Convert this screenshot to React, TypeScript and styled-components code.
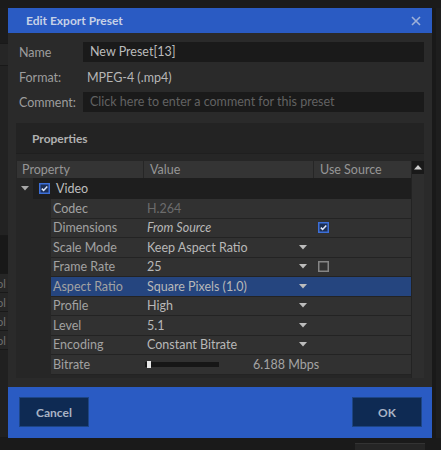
import React from 'react';
import styled, { createGlobalStyle } from 'styled-components';

const Global = createGlobalStyle`
  html, body { margin: 0; padding: 0; background: #1b1b1b; }
  body { font-family: Lato, "Noto Sans", "DejaVu Sans", sans-serif; font-size: 12.5px; }
  * { box-sizing: border-box; }
`;

const Desktop = styled.div`
  width: 441px;
  height: 450px;
  overflow: hidden;
  background: #1b1b1b;
  display: flex;
  flex-direction: column;
  padding-top: 8px;
`;

const Middle = styled.div`
  display: flex;
  height: 430px;
`;

const LeftRail = styled.div`
  width: 8px;
  display: flex;
  flex-direction: column;
  background: #202020;
`;

const RailBand = styled.div<{ $h: number; $c: string }>`
  height: ${p => p.$h}px;
  background: ${p => p.$c};
  border-bottom: 1px solid #191919;
  color: #6f6f6f;
  font-size: 11px;
  line-height: ${p => p.$h}px;
  overflow: hidden;
  white-space: nowrap;
  text-indent: -3px;
`;

const RightRail = styled.div`
  width: 9px;
  background: #191919;
  border-right: 5px solid #1e1e1e;
`;

const BottomBar = styled.div`
  height: 12px;
  display: flex;
  justify-content: flex-end;
  padding: 5px 16px 0 0;
  background: #1a1a1a;
`;

const BottomTab = styled.div`
  width: 70px;
  background: #252525;
  border-top: 1px solid #333;
`;

const Dialog = styled.div`
  width: 424px;
  height: 430px;
  background: #2a2a2a;
  display: flex;
  flex-direction: column;
`;

const TitleBar = styled.div`
  height: 25px;
  flex: none;
  background: #2a5bc3;
  display: flex;
  align-items: center;
  justify-content: space-between;
  padding: 0 11px 0 18px;
  color: #c6d1e7;
  font-weight: 700;
  font-size: 12px;
`;

const Form = styled.div`
  margin: 9px 8px 0 11px;
  display: grid;
  grid-template-columns: 64px 1fr;
  grid-auto-rows: 20px;
  row-gap: 5px;
  align-items: center;
`;

const Label = styled.div`
  color: #9d9d9d;
`;

const Field = styled.div<{ $placeholder?: boolean }>`
  height: 20px;
  line-height: 20px;
  background: #1a1a1a;
  padding-left: 7px;
  white-space: nowrap;
  overflow: hidden;
  color: ${p => (p.$placeholder ? '#626262' : '#bcbcbc')};
`;

const StaticValue = styled.div`
  padding-left: 4px;
  color: #b6b6b6;
`;

const Panel = styled.div`
  margin: 11px 8px 0 8px;
  height: 255px;
  background: #242424;
  display: flex;
  flex-direction: column;
`;

const PanelHeader = styled.div`
  height: 31px;
  flex: none;
  display: flex;
  align-items: center;
  padding-left: 16px;
  font-weight: 700;
  font-size: 12px;
  color: #b0b0b0;
  background: #232323;
  border-bottom: 1px solid #1f1f1f;
`;

const TreeArea = styled.div`
  flex: 1;
  display: flex;
  padding: 7px 0 0 1px;
  background: #262626;
`;

const Table = styled.div`
  flex: 1;
  display: flex;
  flex-direction: column;
`;

const HeaderRow = styled.div`
  height: 17px;
  display: grid;
  grid-template-columns: 126px 170px 1fr;
  background: #343434;
  color: #969696;
`;

const HeaderCell = styled.div<{ $first?: boolean }>`
  line-height: 17px;
  padding-left: ${p => (p.$first ? 5 : 6)}px;
  border-left: ${p => (p.$first ? 'none' : '1px solid #262626')};
  white-space: nowrap;
`;

const GroupRow = styled.div`
  height: 21px;
  display: flex;
  align-items: center;
`;

const Twisty = styled.div`
  width: 16px;
  height: 21px;
  display: flex;
  align-items: center;
  justify-content: center;
  padding-right: 1px;
`;

const GroupBody = styled.div`
  flex: 1;
  height: 21px;
  background: #1e1e1e;
  display: flex;
  align-items: center;
  gap: 6px;
  padding-left: 6px;
  color: #bdbdbd;
`;

const Row = styled.div<{ $selected?: boolean }>`
  margin-left: 34px;
  height: 19.5px;
  display: grid;
  grid-template-columns: 92px 170px 1fr;
  align-items: center;
  background: ${p => (p.$selected ? '#25457f' : '#313131')};
  border-bottom: 1px solid #232323;
  white-space: nowrap;
`;

const PropCell = styled.div`
  padding-left: 2px;
  color: #a2a2a2;
  overflow: hidden;
`;

const ValueCell = styled.div<{ $dim?: boolean; $italic?: boolean }>`
  display: flex;
  align-items: center;
  padding: 0 6px 0 4px;
  color: ${p => (p.$dim ? '#6c6c6c' : '#b8b8b8')};
  font-style: ${p => (p.$italic ? 'italic' : 'normal')};
`;

const ValueText = styled.span`
  flex: 1;
`;

const SourceCell = styled.div`
  padding-left: 5px;
  display: flex;
  align-items: center;
`;

const Track = styled.div`
  flex: none;
  width: 74px;
  height: 5px;
  margin-left: -2px;
  background: #161616;
  display: flex;
  align-items: center;
  padding-left: 2px;
`;

const Thumb = styled.div`
  width: 4px;
  height: 7px;
  background: #e6e6e6;
`;

const RateText = styled.span`
  margin-left: 34px;
  color: #a4a4a4;
`;

const Scrollbar = styled.div`
  width: 13px;
  display: flex;
  flex-direction: column;
  background: #2e2e2e;
  border-left: 1px solid #232323;
`;

const ScrollButton = styled.div`
  height: 13px;
  background: #191919;
  display: flex;
  align-items: center;
  justify-content: center;
`;

const Footer = styled.div`
  margin-top: auto;
  height: 51px;
  flex: none;
  background: #2a5bc3;
  display: flex;
  justify-content: space-between;
  align-items: flex-start;
  padding: 10px 10px 0 11px;
`;

const Button = styled.button`
  width: 70px;
  height: 30px;
  background: #0e2a53;
  border: 1px solid #1d4585;
  color: #a9b3c5;
  font-family: inherit;
  font-weight: 700;
  font-size: 12px;
  padding: 0;
`;

const DownArrow = ({ color = '#bdbdbd' }: { color?: string }) => (
  <svg width="8" height="5" viewBox="0 0 8 5">
    <path d="M0 0 H8 L4 4.5 Z" fill={color} />
  </svg>
);

const CheckBox = ({ checked }: { checked: boolean }) => (
  <svg width="11" height="11" viewBox="0 0 11 11">
    <rect x="0.75" y="0.75" width="9.5" height="9.5" fill={checked ? '#1c2f55' : 'none'} stroke={checked ? '#3c6fd8' : '#858585'} strokeWidth="1.5" />
    {checked && <path d="M2.8 5.6 L4.6 7.4 L8.3 3.4" fill="none" stroke="#dfe8fb" strokeWidth="1.5" />}
  </svg>
);

type R = {
  name: string;
  value: string;
  dropdown?: boolean;
  dim?: boolean;
  italic?: boolean;
  source?: boolean;
  selected?: boolean;
  slider?: boolean;
};

const rows: R[] = [
  { name: 'Codec', value: 'H.264', dim: true },
  { name: 'Dimensions', value: 'From Source', italic: true, source: true },
  { name: 'Scale Mode', value: 'Keep Aspect Ratio', dropdown: true },
  { name: 'Frame Rate', value: '25', dropdown: true, source: false },
  { name: 'Aspect Ratio', value: 'Square Pixels (1.0)', dropdown: true, selected: true },
  { name: 'Profile', value: 'High', dropdown: true },
  { name: 'Level', value: '5.1', dropdown: true },
  { name: 'Encoding', value: 'Constant Bitrate', dropdown: true },
  { name: 'Bitrate', value: '6.188 Mbps', slider: true },
];

export default function App() {
  return (
    <>
      <Global />
      <Desktop>
        <Middle>
          <LeftRail>
            <RailBand $h={36} $c="#1c1c1c" />
            <RailBand $h={22} $c="#262626" />
            <RailBand $h={170} $c="#222" />
            <RailBand $h={38} $c="#181818" />
            <RailBand $h={19} $c="#262626">ol</RailBand>
            <RailBand $h={19} $c="#262626">ol</RailBand>
            <RailBand $h={19} $c="#262626">ol</RailBand>
            <RailBand $h={19} $c="#262626">ol</RailBand>
            <RailBand $h={88} $c="#202020" />
          </LeftRail>
          <Dialog>
            <TitleBar>
              <span>Edit Export Preset</span>
              <svg width="10" height="10" viewBox="0 0 10 10">
                <path d="M1 1 L9 9 M9 1 L1 9" stroke="#9db0d8" strokeWidth="1.6" />
              </svg>
            </TitleBar>
            <Form>
              <Label>Name</Label>
              <Field>New Preset[13]</Field>
              <Label>Format:</Label>
              <StaticValue>MPEG-4 (.mp4)</StaticValue>
              <Label>Comment:</Label>
              <Field $placeholder>Click here to enter a comment for this preset</Field>
            </Form>
            <Panel>
              <PanelHeader>Properties</PanelHeader>
              <TreeArea>
                <Table>
                  <HeaderRow>
                    <HeaderCell $first>Property</HeaderCell>
                    <HeaderCell>Value</HeaderCell>
                    <HeaderCell>Use Source</HeaderCell>
                  </HeaderRow>
                  <GroupRow>
                    <Twisty>
                      <DownArrow color="#a8a8a8" />
                    </Twisty>
                    <GroupBody>
                      <CheckBox checked />
                      <span>Video</span>
                    </GroupBody>
                  </GroupRow>
                  {rows.map(r => (
                    <Row key={r.name} $selected={r.selected}>
                      <PropCell>{r.name}</PropCell>
                      <ValueCell $dim={r.dim} $italic={r.italic}>
                        {r.slider ? (
                          <>
                            <Track>
                              <Thumb />
                            </Track>
                            <RateText>{r.value}</RateText>
                          </>
                        ) : (
                          <>
                            <ValueText>{r.value}</ValueText>
                            {r.dropdown && <DownArrow />}
                          </>
                        )}
                      </ValueCell>
                      <SourceCell>{r.source !== undefined && <CheckBox checked={r.source} />}</SourceCell>
                    </Row>
                  ))}
                </Table>
                <Scrollbar>
                  <ScrollButton>
                    <svg width="8" height="5" viewBox="0 0 8 5">
                      <path d="M0 4.5 H8 L4 0 Z" fill="#cfcfcf" />
                    </svg>
                  </ScrollButton>
                </Scrollbar>
              </TreeArea>
            </Panel>
            <Footer>
              <Button>Cancel</Button>
              <Button>OK</Button>
            </Footer>
          </Dialog>
          <RightRail />
        </Middle>
        <BottomBar>
          <BottomTab />
        </BottomBar>
      </Desktop>
    </>
  );
}
